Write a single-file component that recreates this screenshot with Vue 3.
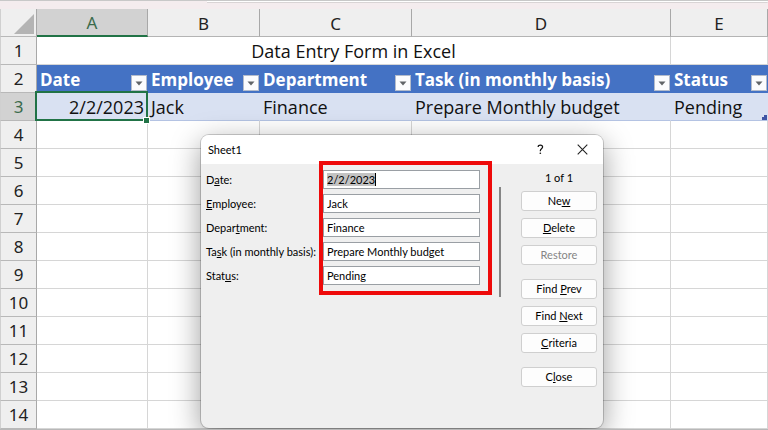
<script setup>
import { ref } from 'vue'

const columns = [
  { letter: 'A', title: 'Date' },
  { letter: 'B', title: 'Employee' },
  { letter: 'C', title: 'Department' },
  { letter: 'D', title: 'Task (in monthly basis)' },
  { letter: 'E', title: 'Status' },
]
const record = ['2/2/2023', 'Jack', 'Finance', 'Prepare Monthly budget', 'Pending']
const emptyRows = [4, 5, 6, 7, 8, 9, 10, 11, 12, 13, 14]

// Labels and captions are split around their keyboard accelerator.
const fields = ref([
  { id: 'date', label: ['D', 'a', 'te:'], value: '2/2/2023' },
  { id: 'employee', label: ['', 'E', 'mployee:'], value: 'Jack' },
  { id: 'department', label: ['Depar', 't', 'ment:'], value: 'Finance' },
  { id: 'task', label: ['Ta', 's', 'k (in monthly basis):'], value: 'Prepare Monthly budget' },
  { id: 'status', label: ['Stat', 'u', 's:'], value: 'Pending' },
])
const actionGroups = [
  [
    { text: ['Ne', 'w', ''] },
    { text: ['', 'D', 'elete'] },
    { text: ['Restore', '', ''], disabled: true },
  ],
  [
    { text: ['Find ', 'P', 'rev'] },
    { text: ['Find ', 'N', 'ext'] },
    { text: ['', 'C', 'riteria'] },
  ],
  [{ text: ['C', 'l', 'ose'] }],
]
</script>

<template>
  <main class="workbook">
    <div class="ribbon-edge"></div>
    <table class="sheet">
      <colgroup>
        <col class="c-head" />
        <col class="c-a" />
        <col class="c-b" />
        <col class="c-c" />
        <col class="c-d" />
        <col />
      </colgroup>
      <thead>
        <tr>
          <th class="corner">
            <svg class="corner-mark" width="20" height="20" viewBox="0 0 20 20" aria-hidden="true">
              <path d="M20 0V20H0Z" fill="#b4b4b4" />
            </svg>
          </th>
          <th v-for="c in columns" :key="c.letter" class="col-head" :class="{ active: c.letter === 'A' }" scope="col">
            {{ c.letter }}
          </th>
        </tr>
      </thead>
      <tbody>
        <tr>
          <th class="row-head" scope="row">1</th>
          <td class="title" colspan="4">Data Entry Form in Excel</td>
          <td></td>
        </tr>
        <tr class="titles">
          <th class="row-head" scope="row">2</th>
          <td v-for="c in columns" :key="c.letter">
            <div class="heading">
              <span>{{ c.title }}</span>
              <button type="button" class="filter" :aria-label="'Filter ' + c.title">
                <svg width="8" height="5" viewBox="0 0 8 5" aria-hidden="true">
                  <path d="M0.5 0.5H7.5L4 4.5Z" fill="#606468" />
                </svg>
              </button>
            </div>
          </td>
        </tr>
        <tr class="record">
          <th class="row-head active" scope="row">3</th>
          <td v-for="(v, i) in record" :key="v" :class="{ selected: i === 0, last: i === 4 }">{{ v }}</td>
        </tr>
        <tr v-for="n in emptyRows" :key="n">
          <th class="row-head" scope="row">{{ n }}</th>
          <td v-for="c in columns" :key="c.letter"></td>
        </tr>
      </tbody>
    </table>

    <section class="dialog" role="dialog" aria-labelledby="form-title">
      <header class="titlebar">
        <h1 id="form-title">Sheet1</h1>
        <button type="button" class="tool" aria-label="Help">
          <svg width="7" height="11" viewBox="0 0 8 12" aria-hidden="true">
            <path d="M1.3 3.2C1.3 1.7 2.4 0.9 3.8 0.9C5.3 0.9 6.4 1.7 6.4 3.1C6.4 5 3.8 5.2 3.8 7.4V8" fill="none" stroke="#111" stroke-width="1.4" />
            <circle cx="3.8" cy="10.3" r="0.95" fill="#111" />
          </svg>
        </button>
        <button type="button" class="tool" aria-label="Close window">
          <svg width="11" height="11" viewBox="0 0 11 11" aria-hidden="true">
            <path d="M0.7 0.7L10.3 10.3M10.3 0.7L0.7 10.3" stroke="#222" stroke-width="1.1" />
          </svg>
        </button>
      </header>
      <form class="content" @submit.prevent>
        <div class="fields">
          <div v-for="f in fields" :key="f.id" class="field">
            <label :for="f.id">{{ f.label[0] }}<u>{{ f.label[1] }}</u>{{ f.label[2] }}</label>
            <div class="box">
              <input :id="f.id" v-model="f.value" type="text" :class="{ marked: f.id === 'date' }" />
            </div>
          </div>
          <div class="highlight"></div>
        </div>
        <div class="scroll"></div>
        <div class="actions">
          <p>1 of 1</p>
          <div v-for="(g, i) in actionGroups" :key="i" class="group">
            <button v-for="b in g" :key="b.text.join('')" type="button" class="action" :disabled="b.disabled">
              {{ b.text[0] }}<u>{{ b.text[1] }}</u>{{ b.text[2] }}
            </button>
          </div>
        </div>
      </form>
    </section>
  </main>
</template>

<style>
body {
  margin: 0;
  background: #fff;
}
</style>

<style scoped>
* {
  box-sizing: border-box;
}
.workbook {
  position: relative;
  overflow: hidden;
  border-bottom: 1px solid #b8b8b8;
  background: #fff;
}
.ribbon-edge {
  height: 9px;
  border-top: 1px solid #c8c8c8;
  background: linear-gradient(#fff 1px, #d9d4d5 1px, #d9d4d5 2px, transparent 2px) right / 73% 100% no-repeat, #f4ecee;
}
.sheet {
  width: 100%;
  table-layout: fixed;
  border-collapse: separate;
  border-spacing: 0;
  font: 18px/24px "Open Sans", "Noto Sans", sans-serif;
  color: #111;
}
.c-head { width: 37px; }
.c-a { width: 111px; }
.c-b { width: 112px; }
.c-c { width: 152px; }
.c-d { width: 259px; }
th,
td {
  height: 28px;
  padding: 0 3px;
  border-right: 1px solid #d6d6d6;
  border-bottom: 1px solid #d6d6d6;
  white-space: nowrap;
}
.corner,
.col-head,
.row-head {
  padding: 0;
  background: #efefef;
  font: 17px/24px "Noto Sans", "Open Sans", sans-serif;
  color: #222;
  text-align: center;
}
.corner,
.row-head {
  border-left: 1px solid #d0d0d0;
  border-right-color: #a8a8a8;
  border-bottom-color: #b8b8b8;
}
.corner {
  padding: 4px 2px 2px;
  text-align: right;
}
.corner-mark {
  display: block;
  margin-left: auto;
}
.col-head {
  padding-top: 2px;
  border-right-color: #a8a8a8;
  border-bottom-color: #b4b4b4;
}
.col-head.active,
.row-head.active {
  background: #d2d2d2;
  color: #3b6b4c;
}
.col-head.active {
  border-bottom: 2px solid #217346;
}
.title {
  text-align: center;
}
.titles td {
  padding: 0 0 0 3px;
  border-color: #4472c4;
  background: #4472c4;
  color: #fff;
  font-size: 17px;
  font-weight: 700;
}
.heading {
  display: flex;
  align-items: flex-end;
  justify-content: space-between;
  height: 27px;
}
.filter {
  display: grid;
  place-items: center;
  flex: none;
  width: 16px;
  height: 16px;
  margin-bottom: 1px;
  padding: 0;
  border: 1px solid #b4bccb;
  background: #fbfcfe;
}
.record td {
  border-color: #d9e1f2;
  border-bottom-color: #b4c3e3;
  background: #d9e1f2;
}
.record .selected {
  position: relative;
  text-align: right;
}
.selected::before {
  content: "";
  position: absolute;
  inset: -2px -1px -1px -2px;
  border: 2px solid #217346;
}
.selected::after {
  content: "";
  position: absolute;
  right: -2px;
  bottom: -3px;
  width: 5px;
  height: 5px;
  outline: 1px solid #fff;
  background: #217346;
}
.record .last {
  background: linear-gradient(#3f55a5, #3f55a5) right bottom / 5px 3px no-repeat,
    linear-gradient(#3f55a5, #3f55a5) right bottom / 3px 5px no-repeat, #d9e1f2;
}
.dialog {
  position: absolute;
  top: 135px;
  left: 201px;
  width: 402px;
  height: 293px;
  border-radius: 8px;
  background: #efefef;
  box-shadow: 0 0 0 1px rgba(0, 0, 0, 0.18), 0 8px 30px rgba(0, 0, 0, 0.4);
  font: 11px/16px Lato, "Noto Sans", sans-serif;
  color: #000;
}
.titlebar {
  display: flex;
  align-items: center;
  height: 29px;
  padding: 0 9px 0 7px;
  border-radius: 8px 8px 0 0;
  background: #fff;
}
h1 {
  flex: 1;
  margin: 0;
  font-size: 11px;
  font-weight: 400;
}
.tool {
  display: grid;
  place-items: center;
  width: 24px;
  height: 24px;
  padding: 0;
  border: 0;
  background: none;
}
.tool + .tool {
  margin-left: 18px;
}
.content {
  display: flex;
  align-items: flex-start;
  padding: 6px 6px 0 5px;
}
.fields {
  position: relative;
  display: grid;
  gap: 5px;
  flex: 1;
}
.field {
  display: grid;
  grid-template-columns: 117px 1fr;
}
label {
  line-height: 19px;
  white-space: nowrap;
}
.box {
  height: 19px;
  padding: 0 3px;
  border: 1px solid #9a9fa4;
  background: #fff;
}
input {
  display: block;
  width: 100%;
  height: 17px;
  padding: 0;
  border: 0;
  border-radius: 0;
  background: none;
  font: inherit;
  color: inherit;
}
.marked {
  width: auto;
  height: 13px;
  margin-top: 2px;
  field-sizing: content;
  border-right: 1px solid #000;
  background: #c3c3c3;
}
.highlight {
  position: absolute;
  inset: -9px -12px -10px 113px;
  border: 4px solid #ee0a0a;
  pointer-events: none;
}
.scroll {
  width: 2px;
  height: 110px;
  margin: 17px 20px 0 19px;
  background: #858585;
}
.actions {
  display: flex;
  flex-direction: column;
  gap: 14px;
  width: 76px;
}
p {
  margin: 0 0 -9px;
  text-align: center;
}
.group {
  display: grid;
  gap: 7px;
}
.action {
  height: 20px;
  padding: 0;
  border: 1px solid #cfcfcf;
  border-radius: 3px;
  background: #fdfdfd;
  font: inherit;
  line-height: 18px;
  color: inherit;
}
.action:disabled {
  color: #858585;
}
</style>
